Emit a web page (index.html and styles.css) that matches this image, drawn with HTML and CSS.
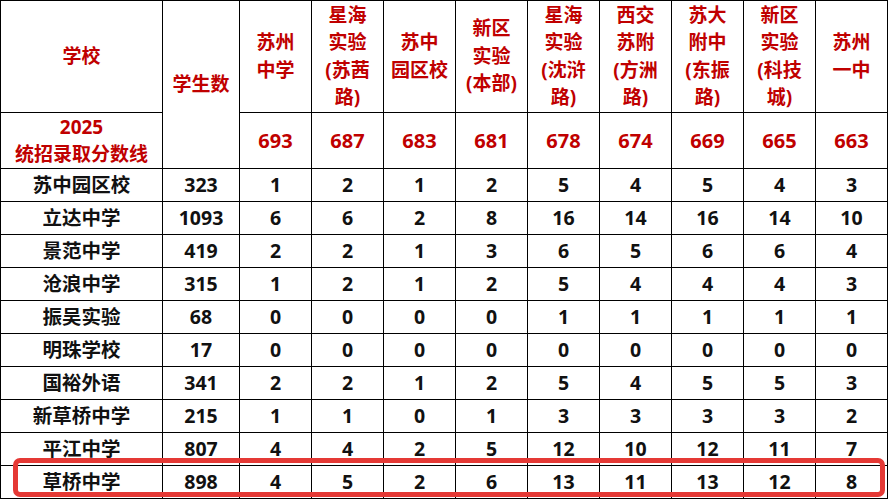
FILE: index.html
```html
<!DOCTYPE html>
<html lang="zh">
<head>
<meta charset="utf-8">
<title>2025 统招录取分数线</title>
<link rel="stylesheet" href="styles.css">
</head>
<body>
<div class="wrap">
<table class="score">
<colgroup>
<col class="c-school"><col class="c-count">
<col class="c-n"><col class="c-n"><col class="c-n"><col class="c-n"><col class="c-n">
<col class="c-n"><col class="c-n"><col class="c-n"><col class="c-n">
</colgroup>
<thead>
<tr class="h1">
<th>学校</th>
<th rowspan="2">学生数</th>
<th>苏州<br>中学</th>
<th>星海<br>实验<br>(苏茜<br>路)</th>
<th>苏中<br>园区校</th>
<th>新区<br>实验<br>(本部)</th>
<th>星海<br>实验<br>(沈浒<br>路)</th>
<th>西交<br>苏附<br>(方洲<br>路)</th>
<th>苏大<br>附中<br>(东振<br>路)</th>
<th>新区<br>实验<br>(科技<br>城)</th>
<th>苏州<br>一中</th>
</tr>
<tr class="h2">
<th>2025<br>统招录取分数线</th>
<th>693</th><th>687</th><th>683</th><th>681</th><th>678</th><th>674</th><th>669</th><th>665</th><th>663</th>
</tr>
</thead>
<tbody>
<tr><td>苏中园区校</td><td>323</td><td>1</td><td>2</td><td>1</td><td>2</td><td>5</td><td>4</td><td>5</td><td>4</td><td>3</td></tr>
<tr><td>立达中学</td><td>1093</td><td>6</td><td>6</td><td>2</td><td>8</td><td>16</td><td>14</td><td>16</td><td>14</td><td>10</td></tr>
<tr><td>景范中学</td><td>419</td><td>2</td><td>2</td><td>1</td><td>3</td><td>6</td><td>5</td><td>6</td><td>6</td><td>4</td></tr>
<tr><td>沧浪中学</td><td>315</td><td>1</td><td>2</td><td>1</td><td>2</td><td>5</td><td>4</td><td>4</td><td>4</td><td>3</td></tr>
<tr><td>振吴实验</td><td>68</td><td>0</td><td>0</td><td>0</td><td>0</td><td>1</td><td>1</td><td>1</td><td>1</td><td>1</td></tr>
<tr><td>明珠学校</td><td>17</td><td>0</td><td>0</td><td>0</td><td>0</td><td>0</td><td>0</td><td>0</td><td>0</td><td>0</td></tr>
<tr><td>国裕外语</td><td>341</td><td>2</td><td>2</td><td>1</td><td>2</td><td>5</td><td>4</td><td>5</td><td>5</td><td>3</td></tr>
<tr><td>新草桥中学</td><td>215</td><td>1</td><td>1</td><td>0</td><td>1</td><td>3</td><td>3</td><td>3</td><td>3</td><td>2</td></tr>
<tr><td>平江中学</td><td>807</td><td>4</td><td>4</td><td>2</td><td>5</td><td>12</td><td>10</td><td>12</td><td>11</td><td>7</td></tr>
<tr class="last"><td>草桥中学</td><td>898</td><td>4</td><td>5</td><td>2</td><td>6</td><td>13</td><td>11</td><td>13</td><td>12</td><td>8</td></tr>
</tbody>
</table>
<div class="highlight"></div>
</div>
</body>
</html>
```

FILE: styles.css
```css
html, body {
  margin: 0;
  padding: 0;
  background: #ffffff;
}

.wrap {
  position: relative;
  width: 888px;
  height: 499px;
  overflow: hidden;
}

.score {
  border-collapse: collapse;
  table-layout: fixed;
  width: 887px;
  font-family: "Open Sans", "Noto Sans CJK SC", sans-serif;
  font-weight: 700;
  font-size: 19.5px;
  color: #111111;
}

.c-school { width: 162px; }
.c-count { width: 77px; }
.c-n { width: 72px; }

.score th,
.score td {
  border: 1.5px solid #000000;
  padding: 0;
  text-align: center;
  vertical-align: middle;
  white-space: nowrap;
}

.score th {
  color: #c00000;
  font-size: 19px;
  line-height: 27.5px;
}

.h1 th { height: 111px; }
.h2 th { height: 55px; font-size: 20px; }
.h2 th:first-child { font-size: 19px; line-height: 27px; }

.score td {
  height: 32px;
  line-height: 24px;
}

.highlight {
  position: absolute;
  left: 13px;
  top: 458px;
  width: 862px;
  height: 29px;
  border: 5px solid #e53935;
  border-radius: 7px;
}
```
